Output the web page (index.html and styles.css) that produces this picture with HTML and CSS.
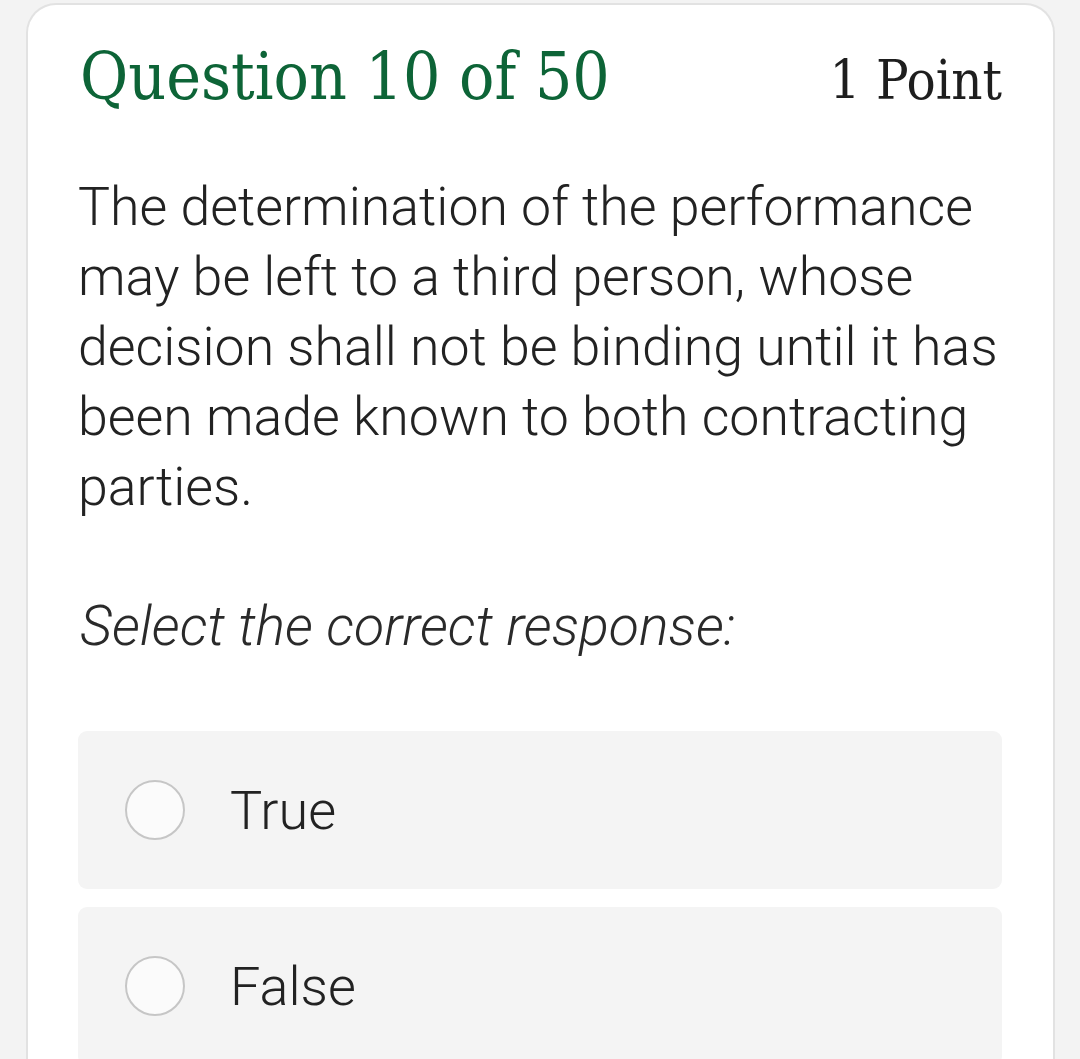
FILE: index.html
```html
<!DOCTYPE html>
<html>
<head>
<meta charset="utf-8">
<link rel="stylesheet" href="styles.css">
</head>
<body>
<div class="page">
  <div class="card">
    <div class="header">
      <h1 class="qnum">Question 10 of 50</h1>
      <span class="points">1 Point</span>
    </div>
    <p class="question">The determination of the performance may be left to a third person, whose decision shall not be binding until it has been made known to both contracting parties.</p>
    <p class="prompt">Select the correct response:</p>
    <div class="options">
      <label class="option"><span class="radio"></span><span class="label">True</span></label>
      <label class="option"><span class="radio"></span><span class="label">False</span></label>
    </div>
  </div>
</div>
</body>
</html>
```
FILE: styles.css
```css
html, body {
  margin: 0;
  padding: 0;
  background: #f3f3f3;
  height: 100%;
  overflow: hidden;
}
.page {
  padding: 3px 25px 0 26px;
}
.card {
  background: #ffffff;
  border: 2px solid #e2e2e2;
  border-bottom: none;
  border-radius: 30px 30px 0 0;
  padding: 32px 51px 40px 50px;
  min-height: 1100px;
  box-sizing: border-box;
}
.header {
  display: flex;
  justify-content: space-between;
  align-items: baseline;
  padding-left: 2px;
}
.qnum {
  margin: 0;
  font-family: "DejaVu Serif Condensed", "DejaVu Serif", serif;
  font-weight: normal;
  font-size: 65.4px;
  line-height: 79px;
  color: #0d6437;
}
.points {
  font-family: "DejaVu Serif Condensed", "DejaVu Serif", serif;
  font-size: 54px;
  color: #1e1e1e;
}
.question {
  margin: 56px -12px 0 0;
  font-family: Roboto, "Liberation Sans", sans-serif;
  font-weight: 300;
  font-size: 53.7px;
  line-height: 70px;
  color: #222222;
}
.prompt {
  margin: 70px 0 0 2px;
  font-family: Roboto, "Liberation Sans", sans-serif;
  font-weight: 300;
  font-style: italic;
  font-size: 55.5px;
  line-height: 70px;
  color: #2a2a2a;
}
.options {
  margin-top: 69px;
  display: flex;
  flex-direction: column;
  gap: 18px;
}
.option {
  display: flex;
  align-items: center;
  background: #f4f4f4;
  border-radius: 9px;
  height: 158px;
  padding-left: 47px;
  box-sizing: border-box;
}
.radio {
  width: 60px;
  height: 60px;
  box-sizing: border-box;
  border: 2px solid #c6c6c6;
  border-radius: 50%;
  background: #fbfbfb;
  flex: none;
}
.label {
  margin-left: 45px;
  font-family: Roboto, "Liberation Sans", sans-serif;
  font-weight: 300;
  font-size: 54px;
  color: #222222;
}
```
